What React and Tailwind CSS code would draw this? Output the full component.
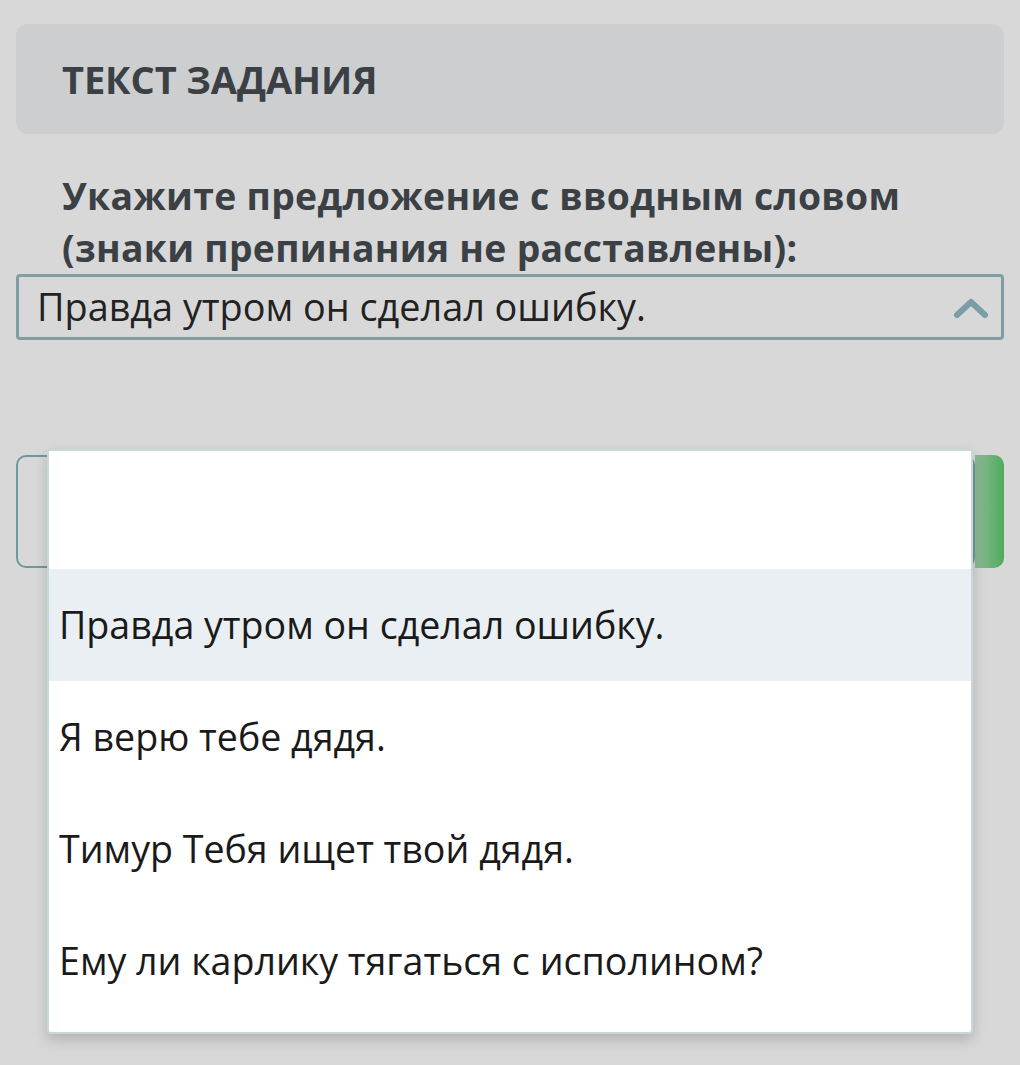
import { useState } from "react";

const options = [
  "",
  "Правда утром он сделал ошибку.",
  "Я верю тебе дядя.",
  "Тимур Тебя ищет твой дядя.",
  "Ему ли карлику тягаться с исполином?",
];

function ChevronUp() {
  return (
    <svg className="w-[36px] h-[24px]" viewBox="0 0 36 24" fill="none">
      <polyline
        points="4,20 18,7 32,20"
        stroke="#7a9ea3"
        strokeWidth="6"
        strokeLinecap="round"
        strokeLinejoin="round"
      />
    </svg>
  );
}

export default function App() {
  const [selected] = useState(1);

  return (
    <div
      className="min-h-screen bg-[#d8d8d8] px-4 pt-6 text-[#222]"
      style={{ fontFamily: '"Open Sans", "Noto Sans", sans-serif' }}
    >
      {/* Task header */}
      <div className="h-[110px] rounded-xl bg-[#cdced0] px-[46px] flex items-center">
        <h1 className="text-[38px] font-bold text-[#3b4045] leading-none tracking-[-0.1px]">
          ТЕКСТ ЗАДАНИЯ
        </h1>
      </div>

      {/* Question */}
      <p className="mt-[36px] px-[46px] text-[37.3px] font-bold leading-[52px] text-[#3b4045] tracking-[0.3px]">
        Укажите предложение с вводным словом (знаки препинания не расставлены):
      </p>

      <div className="relative">
        {/* Select */}
        <div className="h-[66px] border-[3px] border-[#7f9fa4] rounded-[4px] flex items-center justify-between pl-[18px] pr-[12px]">
          <span className="text-[37.8px] leading-none text-[#222]">{options[selected]}</span>
          <ChevronUp />
        </div>

        {/* Next row, behind the menu */}
        <div className="mt-[115px] flex h-[113px]">
          <div className="flex-1 border-2 border-[#6f9a98] rounded-[10px] bg-[#d8d8d8]"></div>
          <div className="w-[29px] rounded-r-[10px] bg-gradient-to-r from-[#8fb898] to-[#4aad5c]"></div>
        </div>

        {/* Dropdown menu */}
        <div className="absolute left-[31px] top-[175px] w-[926px] bg-white border-2 border-[#c8d8da] rounded-[4px] shadow-[0_6px_14px_rgba(0,0,0,0.18)] pb-[15px]">
          {options.map((opt, i) => (
            <div
              key={i}
              className={`flex items-center pl-[10px] text-[37.6px] leading-none text-[#1a1a1a] ${
                i === 0 ? "h-[118px]" : "h-[112px]"
              } ${i === selected ? "bg-[#e9eff2]" : "bg-white"}`}
            >
              {opt}
            </div>
          ))}
        </div>
      </div>
    </div>
  );
}
